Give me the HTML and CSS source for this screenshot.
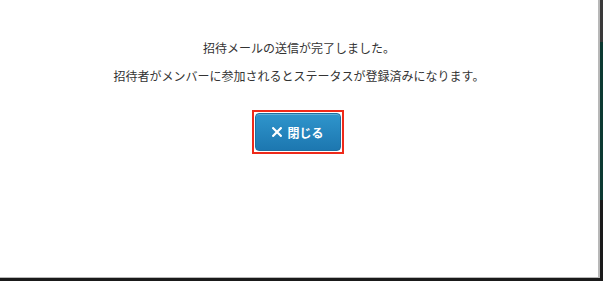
FILE: index.html
```html
<!DOCTYPE html>
<html lang="ja">
<head>
<meta charset="utf-8">
<link rel="stylesheet" href="styles.css">
</head>
<body>
<div class="screen">
  <div class="modal">
    <div class="message">
      <p>招待メールの送信が完了しました。</p>
      <p>招待者がメンバーに参加されるとステータスが登録済みになります。</p>
    </div>
    <div class="actions">
      <div class="focus-ring">
        <button class="close-btn" type="button"><svg class="x" width="10" height="10" viewBox="0 0 10 10"><path d="M1.2 1.2 L8.8 8.8 M8.8 1.2 L1.2 8.8" stroke="#fff" stroke-width="2.2" stroke-linecap="square" fill="none"/></svg><span>閉じる</span></button>
      </div>
    </div>
  </div>
</div>
</body>
</html>
```
FILE: styles.css
```css
html, body {
  margin: 0;
  padding: 0;
  width: 603px;
  height: 281px;
  overflow: hidden;
}
body {
  font-family: "Noto Sans CJK JP", "Noto Sans", sans-serif;
}
.screen {
  width: 603px;
  height: 281px;
  background: linear-gradient(to bottom, #3a3a3a 0, #3a3a3a 42px, #0c3a32 42px, #0c3a32 200px, #1a1a1a 200px);
  display: flex;
  align-items: flex-start;
  justify-content: flex-start;
}
.modal {
  width: 598px;
  height: 277px;
  background: #fff;
  border-right: 2px solid #b8b8b8;
  border-bottom: 1px solid #b8b8b8;
  display: flex;
  flex-direction: column;
  align-items: center;
}
.message {
  margin-top: 34px;
  text-align: center;
  color: #333;
  font-size: 12px;
  line-height: 28px;
}
.message p {
  margin: 0;
}
.actions {
  margin-top: 20px;
  display: flex;
  justify-content: center;
}
.focus-ring {
  border: 2px solid #ee2a1a;
  padding: 1px;
  margin-left: -2px;
  display: flex;
}
.close-btn {
  width: 86px;
  height: 38px;
  border: 1px solid #1f6f9f;
  border-radius: 4px;
  background: linear-gradient(to bottom, #2f95cc 0%, #1d77b0 100%);
  color: #fff;
  font-family: "Noto Sans CJK JP", "Noto Sans", sans-serif;
  font-size: 12px;
  font-weight: bold;
  display: flex;
  align-items: center;
  justify-content: center;
  gap: 5px;
  padding: 0;
  box-shadow: inset 0 1px 0 rgba(255,255,255,0.25);
}
.close-btn .x {
  display: block;
}
```
